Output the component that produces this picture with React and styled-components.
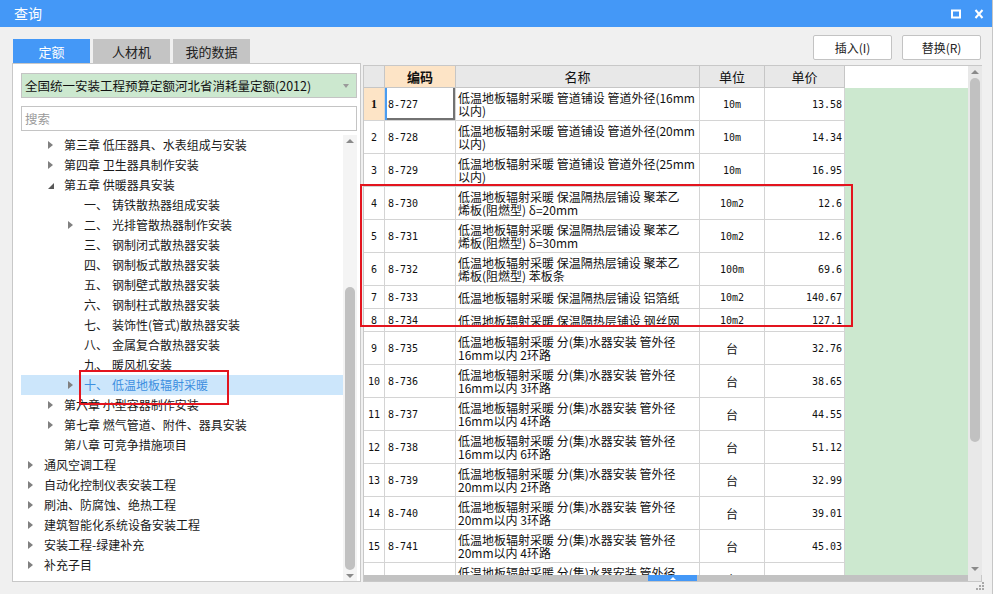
import React from "react";
import styled, { createGlobalStyle, css } from "styled-components";

const GlobalStyle = createGlobalStyle`
  html, body { margin: 0; padding: 0; background: #fbfbfb; overflow: hidden; }
  body { font-family: "Noto Sans CJK SC", "Noto Sans", sans-serif; }
  * { box-sizing: border-box; }
`;

const CJK = `"Noto Sans CJK SC", "Noto Sans", sans-serif`;
const MONO = `"DejaVu Sans Mono", "Liberation Mono", "Noto Sans CJK SC", monospace`;

const Screen = styled.div`
  position: relative;
  width: 1001px;
  height: 594px;
  display: flex;
`;

const Dialog = styled.div`
  position: relative;
  width: 992px;
  height: 594px;
  background: #f0f0f0;
  display: flex;
  flex-direction: column;
`;

const OuterStrip = styled.div`
  flex: 1;
  border-left: 1px solid #c6c6c6;
  background: #ffffff;
`;

const TitleBar = styled.div`
  height: 27px;
  background: #4498f7;
  display: flex;
  align-items: center;
  padding: 0 8px 0 14px;
  color: #fff;
`;

const Title = styled.span`
  font-family: ${CJK};
  font-size: 14px;
  line-height: 27px;
`;

const TitleIcons = styled.div`
  margin-left: auto;
  display: flex;
  align-items: center;
  gap: 13px;
`;

const Body = styled.div`
  flex: 1;
  min-height: 0;
  padding: 0 10px 12px 12px;
  display: flex;
  flex-direction: column;
`;

const TopBar = styled.div`
  height: 36px;
  display: flex;
`;

const Tabs = styled.div`
  align-self: flex-end;
  display: flex;
  gap: 3px;
  margin-left: 1px;
`;

const Tab = styled.div`
  width: 77px;
  height: 24px;
  display: flex;
  align-items: center;
  justify-content: center;
  font-family: ${CJK};
  font-size: 13px;
  color: #222;
  background: #c4c4c4;
  ${(p) =>
    p.$active &&
    css`
      background: #4498f7;
      color: #fff;
    `}
`;

const Buttons = styled.div`
  margin-left: auto;
  margin-top: 8px;
  margin-right: 1px;
  display: flex;
  gap: 10px;
  align-self: flex-start;
`;

const Button = styled.div`
  width: 79px;
  height: 25px;
  background: #fff;
  border: 1px solid #c3c3c3;
  border-radius: 2px;
  display: flex;
  align-items: center;
  justify-content: center;
  font-family: ${CJK};
  font-size: 12px;
  color: #222;
`;

const Main = styled.div`
  flex: 1;
  min-height: 0;
  display: flex;
  gap: 2px;
`;

const LeftPanel = styled.div`
  width: 349px;
  background: #fff;
  border: 1px solid #c8c8c8;
  padding: 9px 3px 0 8px;
  display: flex;
  flex-direction: column;
`;

const Select = styled.div`
  height: 25px;
  background: #cce8cf;
  border: 1px solid #c4c4c4;
  display: flex;
  align-items: center;
  padding: 0 7px 0 3px;
  font-family: ${CJK};
  font-size: 12.5px;
  color: #111;
`;

const Caret = styled.span`
  margin-left: auto;
  width: 0;
  height: 0;
  border-left: 3px solid transparent;
  border-right: 3px solid transparent;
  border-top: 4px solid #9a9a9a;
`;

const Search = styled.div`
  margin-top: 8px;
  height: 25px;
  background: #fff;
  border: 1px solid #c4c4c4;
  display: flex;
  align-items: center;
  padding-left: 3px;
  font-family: ${CJK};
  font-size: 12.5px;
  color: #9a9a9a;
`;

const TreeArea = styled.div`
  margin-top: 4px;
  flex: 1;
  min-height: 0;
  display: flex;
`;

const TreeList = styled.div`
  flex: 1;
  overflow: hidden;
`;

const TreeRow = styled.div`
  height: 20px;
  display: flex;
  align-items: center;
  padding-left: ${(p) => p.$level * 20}px;
  font-family: ${CJK};
  font-size: 12px;
  line-height: 20px;
  color: #1a1a1a;
  white-space: nowrap;
  ${(p) =>
    p.$selected &&
    css`
      background: #cce6fb;
      color: #3d8fe0;
    `}
`;

const ArrowBox = styled.span`
  width: 23px;
  height: 20px;
  padding-left: 7px;
  display: flex;
  align-items: center;
  flex: none;
`;

const ArrowRight = styled.span`
  width: 0;
  height: 0;
  border-top: 4px solid transparent;
  border-bottom: 4px solid transparent;
  border-left: 5px solid #808080;
`;

const ArrowDown = styled.span`
  width: 0;
  height: 0;
  margin-top: 1px;
  border-top: 6px solid transparent;
  border-right: 6px solid #585858;
`;

const Num = styled.span`
  width: 28px;
  flex: none;
`;

const VScroll = styled.div`
  width: 14px;
  background: ${(p) => p.$bg || "#f4f4f4"};
  display: flex;
  flex-direction: column;
  align-items: center;
`;

const ScrollArrow = styled.div`
  height: ${(p) => p.$h || 12}px;
  width: 100%;
  display: flex;
  align-items: center;
  justify-content: center;
  flex: none;
  &::after {
    content: "";
    width: 0;
    height: 0;
    border-left: 4px solid transparent;
    border-right: 4px solid transparent;
    ${(p) =>
      p.$down
        ? css`border-top: 4px solid #8a8a8a;`
        : css`border-bottom: 4px solid #8a8a8a;`}
  }
`;

const Thumb = styled.div`
  width: ${(p) => p.$w || 10}px;
  height: ${(p) => p.$h}px;
  margin-top: ${(p) => p.$mt}px;
  border-radius: 5px;
  background: #c1c1c1;
  flex: none;
`;

const Spacer = styled.div`
  flex: 1;
`;

const RightPanel = styled.div`
  flex: 1;
  margin-top: 2px;
  border: 1px solid #c8c8c8;
  background: #f0f0f0;
  display: grid;
  grid-template-columns: 1fr 13px;
  grid-template-rows: 1fr 6px;
  min-height: 0;
`;

const Viewport = styled.div`
  overflow: hidden;
  background: #cce8cf;
  min-height: 0;
`;

const COLS = "21px 71px 244px 65px 80px 1fr";

const HeadRow = styled.div`
  display: grid;
  grid-template-columns: ${COLS};
  height: 22px;
  background: #fff;
`;

const HeadCell = styled.div`
  background: ${(p) => (p.$hl ? "#fde4c6" : "#e8e8e8")};
  border-right: 1px solid #c6c6c6;
  border-bottom: 1px solid #c6c6c6;
  display: flex;
  align-items: center;
  justify-content: center;
  font-family: ${CJK};
  font-size: 13px;
  font-weight: ${(p) => (p.$bold ? 700 : 400)};
  color: #111;
`;

const HeadFill = styled.div`
  background: #fff;
`;

const Row = styled.div`
  display: grid;
  grid-template-columns: ${COLS};
  height: ${(p) => p.$h}px;
`;

const Cell = styled.div`
  background: #fff;
  border-right: 1px solid #d4d4d4;
  border-bottom: 1px solid #d4d4d4;
  display: flex;
  align-items: center;
  overflow: hidden;
  white-space: nowrap;
  color: #111;
`;

const NumCell = styled(Cell)`
  justify-content: center;
  font-family: ${MONO};
  font-size: 10px;
  ${(p) =>
    p.$active &&
    css`
      background: #fde4c6;
      font-family: "Liberation Serif", serif;
      font-weight: 700;
      font-size: 12px;
    `}
`;

const CodeCell = styled(Cell)`
  padding-left: 3px;
  font-family: ${MONO};
  font-size: 10px;
  ${(p) =>
    p.$focus &&
    css`
      box-shadow: inset 2px 0 0 #4a9cf0, inset -2px -2px 0 #727272;
    `}
`;

const NameCell = styled(Cell)`
  padding-left: 2px;
  flex-direction: column;
  align-items: flex-start;
  justify-content: center;
  font-family: ${CJK};
  font-size: 12px;
  line-height: 13px;
`;

const UnitCell = styled(Cell)`
  justify-content: center;
  font-family: ${(p) => (p.$cjk ? CJK : MONO)};
  font-size: ${(p) => (p.$cjk ? "12px" : "10px")};
`;

const PriceCell = styled(Cell)`
  justify-content: flex-end;
  padding-right: 2px;
  font-family: ${MONO};
  font-size: 10px;
`;

const Fill = styled.div`
  background: #cce8cf;
`;

const HScroll = styled.div`
  background: #c2c2c2;
  display: flex;
`;

const HThumb = styled.div`
  margin-left: 284px;
  width: 49px;
  height: 6px;
  background: #4498f7;
  display: flex;
  align-items: center;
  justify-content: center;
  &::after {
    content: "";
    width: 0;
    height: 0;
    border-left: 3px solid transparent;
    border-right: 3px solid transparent;
    border-bottom: 3px solid #fff;
  }
`;

const Corner = styled.div`
  background: #e8e8e8;
`;

const Grip = styled.svg`
  position: absolute;
  right: 8px;
  bottom: 2px;
`;

const RedBox = styled.div`
  position: absolute;
  border: 2px solid #e3141e;
  pointer-events: none;
`;

const tree = [
  { level: 1, arrow: "right", text: "第三章 低压器具、水表组成与安装" },
  { level: 1, arrow: "right", text: "第四章 卫生器具制作安装" },
  { level: 1, arrow: "down", text: "第五章 供暖器具安装" },
  { level: 2, num: "一、", text: "铸铁散热器组成安装" },
  { level: 2, arrow: "right", num: "二、", text: "光排管散热器制作安装" },
  { level: 2, num: "三、", text: "钢制闭式散热器安装" },
  { level: 2, num: "四、", text: "钢制板式散热器安装" },
  { level: 2, num: "五、", text: "钢制壁式散热器安装" },
  { level: 2, num: "六、", text: "钢制柱式散热器安装" },
  { level: 2, num: "七、", text: "装饰性(管式)散热器安装" },
  { level: 2, num: "八、", text: "金属复合散热器安装" },
  { level: 2, num: "九、", text: "暖风机安装" },
  { level: 2, arrow: "right", num: "十、", text: "低温地板辐射采暖", selected: true },
  { level: 1, arrow: "right", text: "第六章 小型容器制作安装" },
  { level: 1, arrow: "right", text: "第七章 燃气管道、附件、器具安装" },
  { level: 1, text: "第八章 可竞争措施项目" },
  { level: 0, arrow: "right", text: "通风空调工程" },
  { level: 0, arrow: "right", text: "自动化控制仪表安装工程" },
  { level: 0, arrow: "right", text: "刷油、防腐蚀、绝热工程" },
  { level: 0, arrow: "right", text: "建筑智能化系统设备安装工程" },
  { level: 0, arrow: "right", text: "安装工程-绿建补充" },
  { level: 0, arrow: "right", text: "补充子目" },
];

const P1 = "低温地板辐射采暖 管道铺设 管道外径(";
const P2 = "低温地板辐射采暖 保温隔热层铺设 ";
const P3 = "低温地板辐射采暖 分(集)水器安装 管外径";

const rows = [
  { code: "8-727", name: [P1 + "16mm", "以内)"], unit: "10m", price: "13.58" },
  { code: "8-728", name: [P1 + "20mm", "以内)"], unit: "10m", price: "14.34" },
  { code: "8-729", name: [P1 + "25mm", "以内)"], unit: "10m", price: "16.95" },
  { code: "8-730", name: [P2 + "聚苯乙", "烯板(阻燃型) δ=20mm"], unit: "10m2", price: "12.6" },
  { code: "8-731", name: [P2 + "聚苯乙", "烯板(阻燃型) δ=30mm"], unit: "10m2", price: "12.6" },
  { code: "8-732", name: [P2 + "聚苯乙", "烯板(阻燃型) 苯板条"], unit: "100m", price: "69.6" },
  { code: "8-733", name: [P2 + "铝箔纸"], unit: "10m2", price: "140.67" },
  { code: "8-734", name: [P2 + "钢丝网"], unit: "10m2", price: "127.1" },
  { code: "8-735", name: [P3, "16mm以内 2环路"], unit: "台", price: "32.76" },
  { code: "8-736", name: [P3, "16mm以内 3环路"], unit: "台", price: "38.65" },
  { code: "8-737", name: [P3, "16mm以内 4环路"], unit: "台", price: "44.55" },
  { code: "8-738", name: [P3, "16mm以内 6环路"], unit: "台", price: "51.12" },
  { code: "8-739", name: [P3, "20mm以内 2环路"], unit: "台", price: "32.99" },
  { code: "8-740", name: [P3, "20mm以内 3环路"], unit: "台", price: "39.01" },
  { code: "8-741", name: [P3, "20mm以内 4环路"], unit: "台", price: "45.03" },
  { code: "8-742", name: [P3, "20mm以内 6环路"], unit: "台", price: "51.47" },
];

function TitleButtons() {
  return (
    <TitleIcons>
      <svg width="10" height="10" viewBox="0 0 10 10">
        <rect x="1" y="1.5" width="8" height="7" fill="none" stroke="#fff" strokeWidth="2" />
      </svg>
      <svg width="10" height="10" viewBox="0 0 10 10">
        <path d="M1.5 1 L8.5 9 M8.5 1 L1.5 9" stroke="#fff" strokeWidth="2" />
      </svg>
    </TitleIcons>
  );
}

export default function App() {
  return (
    <>
      <GlobalStyle />
      <Screen>
        <Dialog>
          <TitleBar>
            <Title>查询</Title>
            <TitleButtons />
          </TitleBar>
          <Body>
            <TopBar>
              <Tabs>
                <Tab $active>定额</Tab>
                <Tab>人材机</Tab>
                <Tab>我的数据</Tab>
              </Tabs>
              <Buttons>
                <Button>插入(I)</Button>
                <Button>替换(R)</Button>
              </Buttons>
            </TopBar>
            <Main>
              <LeftPanel>
                <Select>
                  全国统一安装工程预算定额河北省消耗量定额(2012)
                  <Caret />
                </Select>
                <Search>搜索</Search>
                <TreeArea>
                  <TreeList>
                    {tree.map((t, i) => (
                      <TreeRow key={i} $level={t.level} $selected={t.selected}>
                        <ArrowBox>
                          {t.arrow === "right" && <ArrowRight />}
                          {t.arrow === "down" && <ArrowDown />}
                        </ArrowBox>
                        {t.num && <Num>{t.num}</Num>}
                        <span>{t.text}</span>
                      </TreeRow>
                    ))}
                  </TreeList>
                  <VScroll>
                    <ScrollArrow $h={11} />
                    <Thumb $mt={141} $h={283} />
                    <Spacer />
                    <ScrollArrow $h={11} $down />
                  </VScroll>
                </TreeArea>
              </LeftPanel>
              <RightPanel>
                <Viewport>
                  <HeadRow>
                    <HeadCell />
                    <HeadCell $hl $bold>编码</HeadCell>
                    <HeadCell>名称</HeadCell>
                    <HeadCell>单位</HeadCell>
                    <HeadCell>单价</HeadCell>
                    <HeadFill />
                  </HeadRow>
                  {rows.map((r, i) => (
                    <Row key={r.code} $h={r.name.length > 1 ? 33 : 23}>
                      <NumCell $active={i === 0}>{i + 1}</NumCell>
                      <CodeCell $focus={i === 0}>{r.code}</CodeCell>
                      <NameCell>
                        {r.name.map((l, j) => (
                          <span key={j}>{l}</span>
                        ))}
                      </NameCell>
                      <UnitCell $cjk={r.unit === "台"}>{r.unit}</UnitCell>
                      <PriceCell>{r.price}</PriceCell>
                      <Fill />
                    </Row>
                  ))}
                </Viewport>
                <VScroll $bg="#e8e8e8">
                  <ScrollArrow $h={12} />
                  <Thumb $w={10} $mt={0} $h={364} />
                  <Spacer />
                  <ScrollArrow $h={12} $down />
                </VScroll>
                <HScroll>
                  <HThumb />
                </HScroll>
                <Corner />
              </RightPanel>
            </Main>
          </Body>
          <Grip width="10" height="10" viewBox="0 0 10 10">
            {[
              [8, 0],
              [8, 3],
              [5, 3],
              [8, 6],
              [5, 6],
              [2, 6],
            ].map(([x, y], k) => (
              <rect key={k} x={x} y={y} width="2" height="2" fill="#a8a8a8" />
            ))}
          </Grip>
        </Dialog>
        <OuterStrip />
        <RedBox style={{ left: 79, top: 370, width: 150, height: 35 }} />
        <RedBox style={{ left: 360, top: 184, width: 493, height: 143 }} />
      </Screen>
    </>
  );
}
